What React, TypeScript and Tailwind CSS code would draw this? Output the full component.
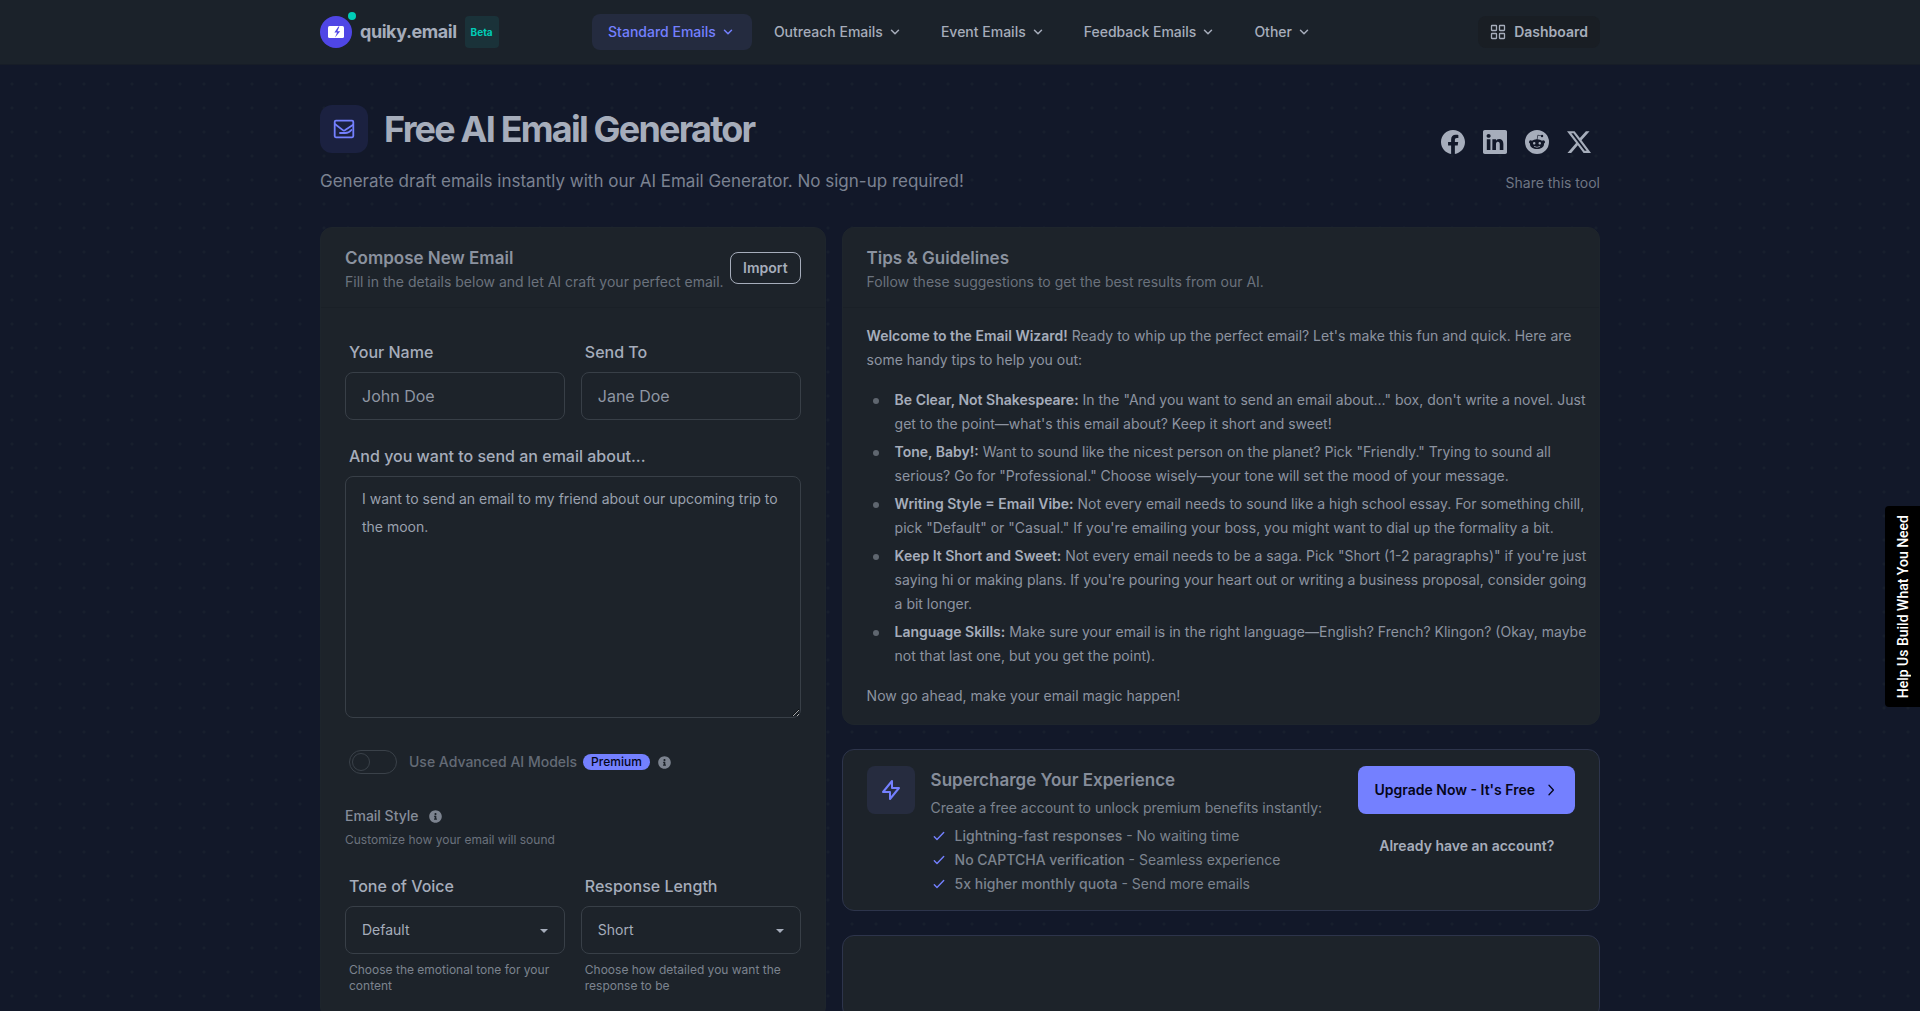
import type { ReactNode } from 'react'
import { BsFacebook, BsLinkedin, BsReddit, BsTwitterX } from 'react-icons/bs'
import { FaInfoCircle } from 'react-icons/fa'

const navItems = [
  { label: 'Standard Emails', active: true },
  { label: 'Outreach Emails', active: false },
  { label: 'Event Emails', active: false },
  { label: 'Feedback Emails', active: false },
  { label: 'Other', active: false },
]

const shareLinks = [
  { label: 'Facebook', Icon: BsFacebook },
  { label: 'LinkedIn', Icon: BsLinkedin },
  { label: 'Reddit', Icon: BsReddit },
  { label: 'X', Icon: BsTwitterX },
]

const tips = [
  {
    title: 'Be Clear, Not Shakespeare:',
    text: 'In the "And you want to send an email about..." box, don\'t write a novel. Just get to the point—what\'s this email about? Keep it short and sweet!',
  },
  {
    title: 'Tone, Baby!:',
    text: 'Want to sound like the nicest person on the planet? Pick "Friendly." Trying to sound all serious? Go for "Professional." Choose wisely—your tone will set the mood of your message.',
  },
  {
    title: 'Writing Style = Email Vibe:',
    text: 'Not every email needs to sound like a high school essay. For something chill, pick "Default" or "Casual." If you\'re emailing your boss, you might want to dial up the formality a bit.',
  },
  {
    title: 'Keep It Short and Sweet:',
    text: 'Not every email needs to be a saga. Pick "Short (1-2 paragraphs)" if you\'re just saying hi or making plans. If you\'re pouring your heart out or writing a business proposal, consider going a bit longer.',
  },
  {
    title: 'Language Skills:',
    text: 'Make sure your email is in the right language—English? French? Klingon? (Okay, maybe not that last one, but you get the point).',
  },
]

const benefits = [
  { title: 'Lightning-fast responses', text: 'No waiting time' },
  { title: 'No CAPTCHA verification', text: 'Seamless experience' },
  { title: '5x higher monthly quota', text: 'Send more emails' },
]

function ChevronDown() {
  return (
    <svg viewBox="0 0 16 16" className="size-4" fill="none" stroke="currentColor" strokeWidth="1.5" aria-hidden="true">
      <path d="M4.5 6.3 8 9.8l3.5-3.5" strokeLinecap="round" strokeLinejoin="round" />
    </svg>
  )
}

function Header() {
  return (
    <header className="border-b border-[#171d27] bg-[#1b222a]">
      <div className="mx-auto flex h-16 max-w-7xl items-center">
        <div className="flex flex-1 items-center gap-2">
          <a href="#" className="flex items-center gap-2">
            <span className="relative flex size-8 items-center justify-center rounded-full bg-[#4f46e5]">
              <svg viewBox="0 0 16 12" className="h-3 w-4" aria-hidden="true">
                <rect width="16" height="12" rx="1.5" fill="#fff" />
                <path d="M10.4.6 6.4 6.5h2.7L7 11.4l5.2-6.2H9.4L11.4.6z" fill="#4f46e5" />
              </svg>
              <span className="absolute -top-1 -right-1 size-2 rounded-full bg-[#00cdb7]" />
            </span>
            <span className="text-lg font-bold tracking-tight text-[#a6adbb]">quiky.email</span>
          </a>
          <span className="flex h-8 items-center rounded-sm bg-[#1a3239] px-1.5 text-[10px] font-bold text-[#00cdb7]">
            Beta
          </span>
        </div>

        <nav className="flex items-center gap-1.5">
          {navItems.map((item) => (
            <button
              key={item.label}
              type="button"
              className={
                item.active
                  ? 'flex h-9 items-center gap-1 rounded-lg bg-[#242b3f] px-4 text-sm font-medium text-[#7480ff]'
                  : 'flex h-9 items-center gap-1 rounded-lg px-4 text-sm font-medium text-[#a6adbb]'
              }
            >
              {item.label}
              <ChevronDown />
            </button>
          ))}
        </nav>

        <div className="flex flex-1 justify-end">
          <a
            href="#"
            className="flex h-8 items-center gap-2 rounded-lg bg-[#191e24] px-3 text-sm font-semibold text-[#a6adbb]"
          >
            <svg
              viewBox="0 0 16 16"
              className="size-4"
              fill="none"
              stroke="currentColor"
              strokeWidth="1.3"
              aria-hidden="true"
            >
              <rect x="1.5" y="1.5" width="5" height="5" rx="0.5" />
              <rect x="9.5" y="1.5" width="5" height="5" rx="0.5" />
              <rect x="1.5" y="9.5" width="5" height="5" rx="0.5" />
              <rect x="9.5" y="9.5" width="5" height="5" rx="0.5" />
            </svg>
            Dashboard
          </a>
        </div>
      </div>
    </header>
  )
}

function PageTitle() {
  return (
    <div className="flex items-end justify-between">
      <div>
        <div className="flex items-center gap-4">
          <div className="flex size-12 items-center justify-center rounded-xl bg-[#1b2140] text-[#7480ff]">
            <svg viewBox="0 0 24 24" className="size-6" fill="none" stroke="currentColor" strokeWidth="1.8" aria-hidden="true">
              <rect x="2.7" y="3.7" width="18.6" height="16.6" rx="1.2" strokeLinejoin="round" />
              <path d="M3.2 7.2l7.6 5.9a2 2 0 0 0 2.4 0L20.8 8" strokeLinecap="round" />
              <path d="M8 16h5c3 0 4.8-1 6.4-3" strokeLinecap="round" />
            </svg>
          </div>
          <h1 className="text-4xl font-bold tracking-tighter text-[#a6adbb]">Free AI Email Generator</h1>
        </div>
        <p className="mt-3.5 text-[17px] leading-7 text-[#7b8291]">
          Generate draft emails instantly with our AI Email Generator. No sign-up required!
        </p>
      </div>
      <div className="flex flex-col items-end gap-2.5 pb-0.5">
        <div className="flex text-[#a6adbb]">
          {shareLinks.map(({ label, Icon }) => (
            <a key={label} href="#" aria-label={`Share on ${label}`} className="flex size-[42px] items-center justify-center">
              <Icon className="size-6" />
            </a>
          ))}
        </div>
        <p className="text-sm text-[#6f7684]">Share this tool</p>
      </div>
    </div>
  )
}

function CardHeader({ title, subtitle, children }: { title: string; subtitle: string; children?: ReactNode }) {
  return (
    <div className="flex items-center justify-between border-b border-[#1a2027] px-6 pt-4 pb-[15px]">
      <div>
        <h2 className="text-[17px] leading-7 font-semibold text-[#8b929f]">{title}</h2>
        <p className="text-sm text-[#6b727d]">{subtitle}</p>
      </div>
      {children}
    </div>
  )
}

function SelectField({ id, label, value, help }: { id: string; label: string; value: string; help: string }) {
  return (
    <div className="min-w-0 flex-1">
      <label htmlFor={id} className="block px-1 py-2 font-medium text-[#a6adbb]">
        {label}
      </label>
      <div className="relative">
        <select
          id={id}
          className="h-12 w-full appearance-none rounded-lg border border-[#383f47] bg-[#1d232a] px-4 text-sm text-[#a6adbb]"
        >
          <option>{value}</option>
        </select>
        <svg viewBox="0 0 8 4" className="pointer-events-none absolute top-[23px] right-[17px] h-1 w-2" aria-hidden="true">
          <path d="M0 0h8L4 4z" fill="#a6adbb" />
        </svg>
      </div>
      <p className="mt-2 px-1 text-xs text-[#7c838f]">{help}</p>
    </div>
  )
}

function ComposeCard() {
  return (
    <section className="min-w-0 rounded-xl border border-[#1e252c] bg-[#1d232a]">
      <CardHeader title="Compose New Email" subtitle="Fill in the details below and let AI craft your perfect email.">
        <button type="button" className="h-8 rounded-lg border border-[#a6adbb] px-3 text-sm font-semibold text-[#a6adbb]">
          Import
        </button>
      </CardHeader>
      <form className="p-6">
        <div className="flex gap-4">
          <div className="min-w-0 flex-1">
            <label htmlFor="name" className="block px-1 py-2 font-medium text-[#a6adbb]">
              Your Name
            </label>
            <input
              id="name"
              placeholder="John Doe"
              className="h-12 w-full rounded-lg border border-[#383f47] bg-transparent px-4 text-[#a6adbb] placeholder:text-[#8f96a3]"
            />
          </div>
          <div className="min-w-0 flex-1">
            <label htmlFor="to" className="block px-1 py-2 font-medium text-[#a6adbb]">
              Send To
            </label>
            <input
              id="to"
              placeholder="Jane Doe"
              className="h-12 w-full rounded-lg border border-[#383f47] bg-transparent px-4 text-[#a6adbb] placeholder:text-[#8f96a3]"
            />
          </div>
        </div>

        <label htmlFor="about" className="mt-4 block px-1 py-2 font-medium text-[#a6adbb]">
          And you want to send an email about...
        </label>
        <textarea
          id="about"
          placeholder="I want to send an email to my friend about our upcoming trip to the moon."
          className="block h-[242px] w-full resize rounded-lg border border-[#383f47] bg-transparent px-4 py-2 text-sm leading-7 text-[#a6adbb] placeholder:text-[#9aa1ae]"
        />

        <div className="mt-6 flex h-10 items-center px-1">
          <input
            id="advanced"
            type="checkbox"
            role="switch"
            disabled
            className="h-6 w-12 appearance-none rounded-full border border-[#3a4149] bg-transparent p-0.5 before:block before:size-[18px] before:rounded-full before:border before:border-[#3a4149]"
          />
          <label htmlFor="advanced" className="ml-3 text-sm font-medium text-[#646b76]">
            Use Advanced AI Models
          </label>
          <span className="ml-1.5 flex h-4 items-center rounded-full bg-[#7480ff] px-2 text-xs font-medium text-[#05061a]">
            Premium
          </span>
          <FaInfoCircle className="ml-2 size-[13px] text-[#7c838f]" />
        </div>

        <div className="mt-6 flex items-center gap-2.5">
          <h3 className="text-sm font-medium text-[#868d9a]">Email Style</h3>
          <FaInfoCircle className="size-[13px] text-[#7c838f]" />
        </div>
        <p className="mt-1.5 mb-4.5 text-xs text-[#6b727d]">Customize how your email will sound</p>

        <div className="flex gap-4">
          <SelectField id="tone" label="Tone of Voice" value="Default" help="Choose the emotional tone for your content" />
          <SelectField id="length" label="Response Length" value="Short" help="Choose how detailed you want the response to be" />
        </div>
      </form>
    </section>
  )
}

function TipsCard() {
  return (
    <section className="rounded-xl border border-[#1e252c] bg-[#1d232a]">
      <CardHeader title="Tips & Guidelines" subtitle="Follow these suggestions to get the best results from our AI." />
      <div className="py-4 pr-2 pl-6 text-sm leading-6 text-[#8d94a1]">
        <p className="pr-4">
          <strong className="font-semibold text-[#a6adbb]">Welcome to the Email Wizard!</strong> Ready to whip up the
          perfect email? Let's make this fun and quick. Here are some handy tips to help you out:
        </p>
        <ul className="my-4 space-y-1">
          {tips.map((tip) => (
            <li key={tip.title} className="flex">
              <span className="mt-2.5 mr-4 ml-1.5 size-1.5 shrink-0 rounded-full bg-[#5f666f]" />
              <p>
                <strong className="font-semibold text-[#a6adbb]">{tip.title}</strong> {tip.text}
              </p>
            </li>
          ))}
        </ul>
        <p>Now go ahead, make your email magic happen!</p>
      </div>
    </section>
  )
}

function UpgradeCard() {
  return (
    <section className="flex items-start gap-4 rounded-xl border border-[#2d344b] bg-[#1d232a] px-6 py-4">
      <div className="flex size-12 shrink-0 items-center justify-center rounded-lg bg-[#262c3f] text-[#7480ff]">
        <svg viewBox="0 0 24 24" className="size-6" fill="none" stroke="currentColor" strokeWidth="2" aria-hidden="true">
          <path d="M13 10V3L4 14h7v7l9-11h-7z" strokeLinecap="round" strokeLinejoin="round" />
        </svg>
      </div>
      <div className="flex-1 text-sm text-[#7c838f]">
        <h2 className="text-[17px] leading-7 font-semibold text-[#868d9a]">Supercharge Your Experience</h2>
        <p className="mt-1">Create a free account to unlock premium benefits instantly:</p>
        <ul className="mt-2 space-y-1">
          {benefits.map((benefit) => (
            <li key={benefit.title} className="flex items-center gap-2">
              <svg viewBox="0 0 16 16" className="size-4" fill="none" stroke="#7480ff" strokeWidth="1.4" aria-hidden="true">
                <path d="M3.3 8.7l2.7 2.8 6.7-7" strokeLinecap="round" strokeLinejoin="round" />
              </svg>
              <span>
                <span className="font-medium">{benefit.title}</span> - {benefit.text}
              </span>
            </li>
          ))}
        </ul>
      </div>
      <div className="flex flex-col gap-2 text-sm font-semibold">
        <button type="button" className="flex h-12 items-center gap-2 rounded-lg bg-[#7480ff] px-4 text-[#05061a]">
          Upgrade Now - It's Free
          <svg viewBox="0 0 16 16" className="size-4" fill="none" stroke="currentColor" strokeWidth="1.3" aria-hidden="true">
            <path d="M6 3.3 10.4 8 6 12.7" strokeLinecap="round" strokeLinejoin="round" />
          </svg>
        </button>
        <button type="button" className="h-12 px-4 text-[#a6adbb]">
          Already have an account?
        </button>
      </div>
    </section>
  )
}

export default function App() {
  return (
    <div className="min-h-screen bg-[#121829] bg-[radial-gradient(circle_at_12px_12px,#181f2d_1px,transparent_2px)] bg-[length:24px_24px] font-['Inter',sans-serif] antialiased">
      <Header />
      <main className="mx-auto max-w-7xl pt-10">
        <PageTitle />
        <div className="mt-8 grid grid-cols-[2fr_3fr] gap-4">
          <ComposeCard />
          <div className="flex min-w-0 flex-col gap-6">
            <TipsCard />
            <UpgradeCard />
            <section className="min-h-[84px] flex-1 rounded-xl border border-[#2d344b] bg-[#1d232a]" />
          </div>
        </div>
      </main>

      {/* Feedback tab pinned to the right edge */}
      <button
        type="button"
        className="fixed top-[506px] right-0 flex h-[201px] w-[35px] items-center justify-center rounded-l-sm bg-black font-['Roboto',sans-serif] text-sm font-medium text-white"
      >
        <span className="rotate-180 [writing-mode:vertical-rl]">Help Us Build What You Need</span>
      </button>
    </div>
  )
}
